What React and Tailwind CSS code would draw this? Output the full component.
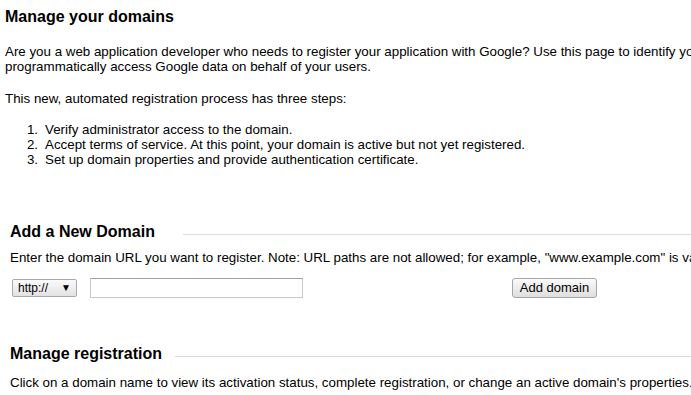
const STEPS = [
  'Verify administrator access to the domain.',
  'Accept terms of service. At this point, your domain is active but not yet registered.',
  'Set up domain properties and provide authentication certificate.',
]

export default function App() {
  return (
    <div className="w-[691px] h-[395px] overflow-hidden bg-white text-black text-[13.33px] leading-[15px] font-['Liberation_Sans',Arial,sans-serif]">
      <div className="w-[900px] px-[5px]">
        {/* page title */}
        <h1 className="mt-[8px] text-[16px] leading-[18px] font-bold">Manage your domains</h1>

        <p className="mt-[18px] whitespace-nowrap">
          Are you a web application developer who needs to register your application with Google? Use this page to identify your domain and obtain credentials to
          <br />
          programmatically access Google data on behalf of your users.
        </p>

        <p className="mt-[17px]">This new, automated registration process has three steps:</p>

        <ol className="mt-[16px]">
          {STEPS.map((s, i) => (
            <li key={i} className="flex">
              <span className="w-[40px] shrink-0 text-right pr-[7px]">{i + 1}.</span>
              <span>{s}</span>
            </li>
          ))}
        </ol>

        {/* add a new domain */}
        <div className="mt-[56px] pl-[5px]">
          <div className="flex items-center">
            <h2 className="text-[16px] leading-[18px] font-bold whitespace-nowrap">Add a New Domain</h2>
            <div className="ml-[28px] h-px flex-1 bg-[#dcdcdc] mt-[4px]" />
          </div>
          <p className="mt-[9px] whitespace-nowrap">
            Enter the domain URL you want to register. Note: URL paths are not allowed; for example, "www.example.com" is valid, but "www.example.com/feeds" is not.
          </p>
          <div className="mt-[13px] flex items-center">
            <div className="relative ml-[2px] w-[65px] h-[18px] border border-[#a9a9a9] rounded-[2px] bg-gradient-to-b from-[#fafafa] to-[#e2e2e2] text-[12px] leading-[16px] pl-[5px]">
              http://
              <span className="absolute right-[5px] top-0 text-[10px] leading-[16px]">▼</span>
            </div>
            <input
              type="text"
              className="ml-[13px] w-[213px] h-[20px] border border-[#c8c8c8] border-t-[#a0a0a0] bg-white outline-none"
            />
            <button className="ml-[209px] w-[85px] h-[20px] border border-[#a6a6a6] rounded-[3px] bg-gradient-to-b from-[#fbfbfb] to-[#dedede] text-[13px] leading-[18px] text-center">
              Add domain
            </button>
          </div>
        </div>

        {/* manage registration */}
        <div className="mt-[47px] pl-[5px]">
          <div className="flex items-center">
            <h2 className="text-[16px] leading-[18px] font-bold whitespace-nowrap">Manage registration</h2>
            <div className="ml-[13px] h-px flex-1 bg-[#dcdcdc] mt-[4px]" />
          </div>
          <p className="mt-[12px] whitespace-nowrap">
            Click on a domain name to view its activation status, complete registration, or change an active domain's properties.
          </p>
        </div>
      </div>
    </div>
  )
}
